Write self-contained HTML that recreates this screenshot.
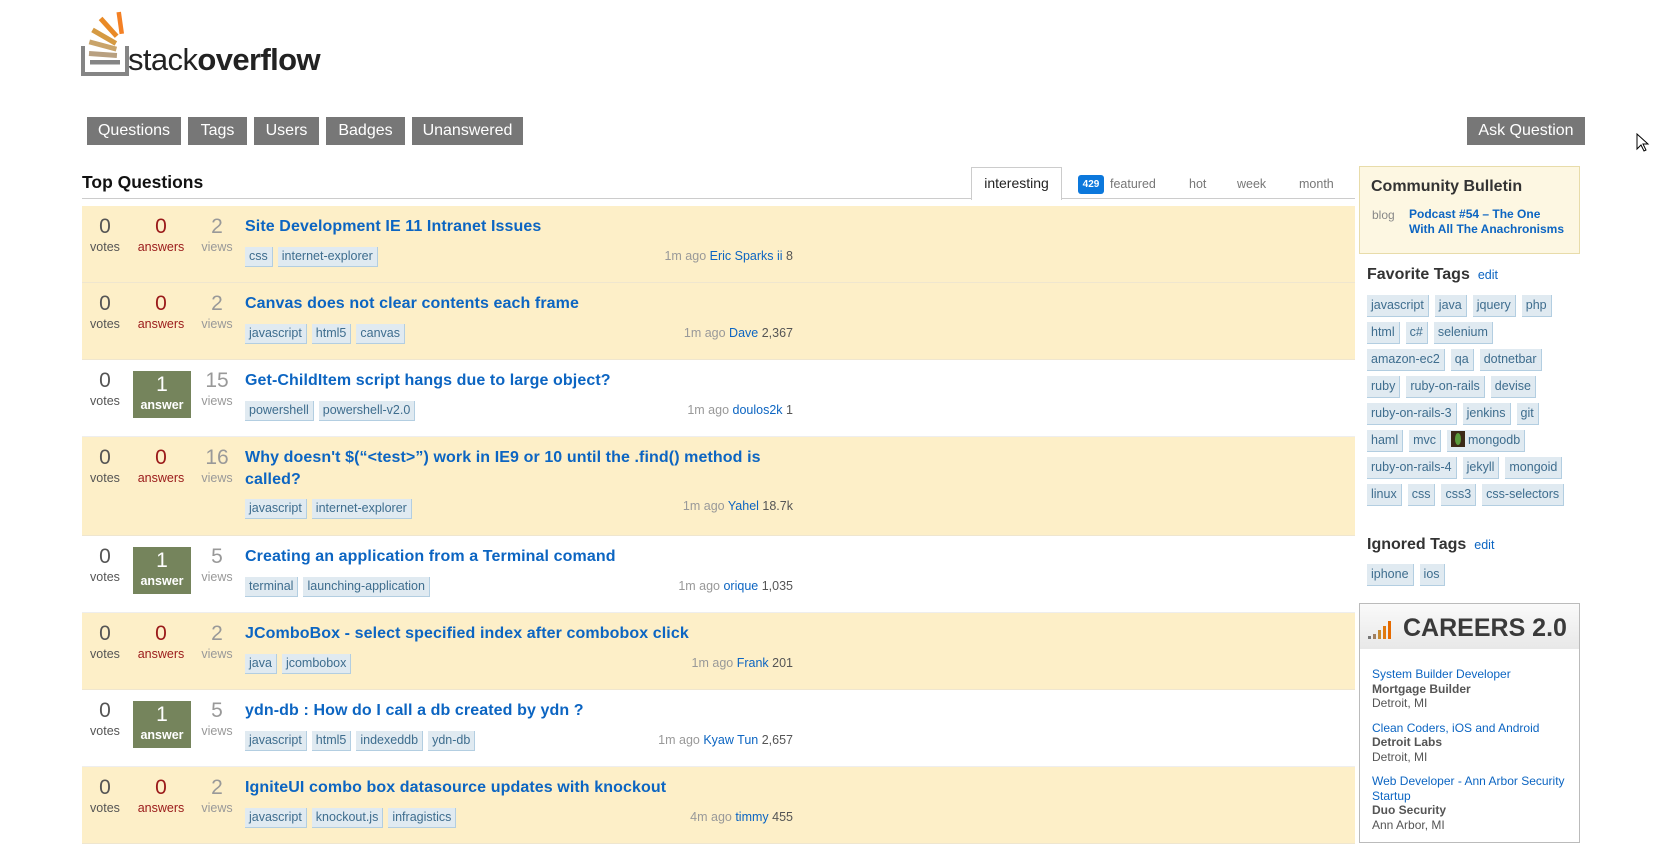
<!DOCTYPE html>
<html><head><meta charset="utf-8"><style>
*{margin:0;padding:0;box-sizing:border-box}
body{width:1654px;height:836px;overflow:hidden;background:#fff;font-family:"Liberation Sans",Arial,sans-serif;position:relative}
.abs{position:absolute}
.nav{position:absolute;top:117px;height:28px;background:#777;color:#fff;font-size:16px;line-height:28px;text-align:center}
.row{position:absolute;left:82px;width:1273px;height:77px;border-bottom:1px solid #efe6cf}
.cream{background:#fdefc8}
.white{background:#fff;border-bottom:1px solid #eee}
.st{position:absolute;top:9px;width:56px;text-align:center}
.st b{display:block;font-weight:normal;font-size:21px;line-height:24px}
.st span{display:block;font-size:12.5px;line-height:16px}
.v{left:-5px;color:#555}
.a{left:51px;color:#9a1a1a}
.vw{left:107px;color:#999}
.ans{position:absolute;left:51px;top:11px;width:58px;height:47px;background:#75845c;color:#fff;text-align:center}
.ans b{display:block;font-weight:normal;font-size:21px;line-height:24px;padding-top:2px}
.ans span{display:block;font-size:12.5px;font-weight:bold;line-height:17px}
.t{position:absolute;left:163px;top:10px;width:570px;color:#0c65c2;font-weight:bold;font-size:16px;line-height:22px;letter-spacing:0.1px}
.tags{position:absolute;left:163px;top:41px;display:flex}
.tag{background:#e0eaf1;color:#3e6d8e;border-right:1px solid #b3cee1;border-bottom:1px solid #b3cee1;font-size:12.5px;height:20px;line-height:19px;padding:0 4px;margin-right:5px;white-space:nowrap}
.info{position:absolute;right:562px;top:43px;font-size:12.5px;color:#999;white-space:nowrap}
.info a{color:#0c65c2;text-decoration:none}
.info i{font-style:normal;color:#555}
.side{position:absolute;left:1367px;width:215px}
.sh{font-size:16px;font-weight:bold;color:#333}
.sh a{font-size:12.5px;font-weight:normal;color:#0c65c2;margin-left:8px}
.tr{display:flex;height:27px}
.tr .tag{margin-right:6px;height:22px;line-height:21px;padding:0 4px;font-size:12.5px}
.job{font-size:12px;line-height:14.5px;color:#555;margin-bottom:10px}
.job a{color:#0c65c2}
.job b{display:block;color:#555}
</style></head><body>

<svg class="abs" style="left:80px;top:10px" width="52" height="66" viewBox="0 0 52 66">
<path d="M3 36v28h44V36" fill="none" stroke="#858585" stroke-width="4"/>
<rect x="10" y="50" width="30" height="4.5" fill="#858585"/>
<rect x="9" y="42" width="28" height="5" fill="#b8a080" transform="rotate(4 23 44)"/>
<rect x="9" y="33" width="28" height="5" fill="#c9a46a" transform="rotate(15 23 35)"/>
<rect x="11" y="24" width="27" height="5" fill="#d59a42" transform="rotate(30 24 26)"/>
<rect x="17" y="15" width="24" height="5" fill="#e98a26" transform="rotate(48 29 17)"/>
<rect x="38" y="2" width="4.5" height="22" fill="#f48024" transform="rotate(-8 40 13)"/>
</svg>
<div class="abs" style="left:128px;top:40px;font-size:31px;color:#222;letter-spacing:-0.6px;line-height:40px">stack<b>overflow</b></div>

<div class="nav" style="left:87px;width:94px">Questions</div>
<div class="nav" style="left:188px;width:59px">Tags</div>
<div class="nav" style="left:254px;width:65px">Users</div>
<div class="nav" style="left:326px;width:79px">Badges</div>
<div class="nav" style="left:412px;width:111px">Unanswered</div>
<div class="nav" style="left:1467px;width:118px">Ask Question</div>

<svg class="abs" style="left:1636px;top:133px" width="14" height="20" viewBox="0 0 14 20"><path d="M1 1v15l4-4 3 6 2-1-3-6h5z" fill="#fff" stroke="#000" stroke-width="1"/></svg>

<div class="abs" style="left:82px;top:172px;font-size:17.5px;font-weight:bold;color:#111">Top Questions</div>
<div class="abs" style="left:82px;top:198px;width:1273px;height:1px;background:#ccc"></div>
<div class="abs" style="left:971px;top:167px;width:91px;height:33px;background:#fff;border:1px solid #ccc;border-bottom:none;font-size:14px;color:#222;text-align:center;line-height:30px">interesting</div>
<div class="abs" style="left:1078px;top:175px;width:26px;height:19px;background:#0c78dc;border-radius:3px;color:#fff;font-size:10px;font-weight:bold;text-align:center;line-height:19px">429</div>
<div class="abs" style="left:1110px;top:177px;font-size:12.5px;color:#777">featured</div>
<div class="abs" style="left:1189px;top:177px;font-size:12.5px;color:#777">hot</div>
<div class="abs" style="left:1237px;top:177px;font-size:12.5px;color:#777">week</div>
<div class="abs" style="left:1299px;top:177px;font-size:12.5px;color:#777">month</div>

<div class="row cream" style="top:206px">
<div class="st v"><b>0</b><span>votes</span></div><div class="st a"><b>0</b><span>answers</span></div><div class="st vw"><b>2</b><span>views</span></div>
<div class="t">Site Development IE 11 Intranet Issues</div>
<div class="tags"><span class="tag">css</span><span class="tag">internet-explorer</span></div>
<div class="info">1m ago <a>Eric Sparks ii</a> <i>8</i></div></div>

<div class="row cream" style="top:283px">
<div class="st v"><b>0</b><span>votes</span></div><div class="st a"><b>0</b><span>answers</span></div><div class="st vw"><b>2</b><span>views</span></div>
<div class="t">Canvas does not clear contents each frame</div>
<div class="tags"><span class="tag">javascript</span><span class="tag">html5</span><span class="tag">canvas</span></div>
<div class="info">1m ago <a>Dave</a> <i>2,367</i></div></div>

<div class="row white" style="top:360px">
<div class="st v"><b>0</b><span>votes</span></div><div class="ans"><b>1</b><span>answer</span></div><div class="st vw"><b>15</b><span>views</span></div>
<div class="t">Get-ChildItem script hangs due to large object?</div>
<div class="tags"><span class="tag">powershell</span><span class="tag">powershell-v2.0</span></div>
<div class="info">1m ago <a>doulos2k</a> <i>1</i></div></div>

<div class="row cream" style="top:437px;height:99px">
<div class="st v"><b>0</b><span>votes</span></div><div class="st a"><b>0</b><span>answers</span></div><div class="st vw"><b>16</b><span>views</span></div>
<div class="t" style="width:560px">Why doesn't $(“&lt;test&gt;”) work in IE9 or 10 until the .find() method is called?</div>
<div class="tags" style="top:62px"><span class="tag">javascript</span><span class="tag">internet-explorer</span></div>
<div class="info" style="top:62px">1m ago <a>Yahel</a> <i>18.7k</i></div></div>

<div class="row white" style="top:536px">
<div class="st v"><b>0</b><span>votes</span></div><div class="ans"><b>1</b><span>answer</span></div><div class="st vw"><b>5</b><span>views</span></div>
<div class="t">Creating an application from a Terminal comand</div>
<div class="tags"><span class="tag">terminal</span><span class="tag">launching-application</span></div>
<div class="info">1m ago <a>orique</a> <i>1,035</i></div></div>

<div class="row cream" style="top:613px">
<div class="st v"><b>0</b><span>votes</span></div><div class="st a"><b>0</b><span>answers</span></div><div class="st vw"><b>2</b><span>views</span></div>
<div class="t">JComboBox - select specified index after combobox click</div>
<div class="tags"><span class="tag">java</span><span class="tag">jcombobox</span></div>
<div class="info">1m ago <a>Frank</a> <i>201</i></div></div>

<div class="row white" style="top:690px">
<div class="st v"><b>0</b><span>votes</span></div><div class="ans"><b>1</b><span>answer</span></div><div class="st vw"><b>5</b><span>views</span></div>
<div class="t">ydn-db : How do I call a db created by ydn ?</div>
<div class="tags"><span class="tag">javascript</span><span class="tag">html5</span><span class="tag">indexeddb</span><span class="tag">ydn-db</span></div>
<div class="info">1m ago <a>Kyaw Tun</a> <i>2,657</i></div></div>

<div class="row cream" style="top:767px">
<div class="st v"><b>0</b><span>votes</span></div><div class="st a"><b>0</b><span>answers</span></div><div class="st vw"><b>2</b><span>views</span></div>
<div class="t">IgniteUI combo box datasource updates with knockout</div>
<div class="tags"><span class="tag">javascript</span><span class="tag">knockout.js</span><span class="tag">infragistics</span></div>
<div class="info">4m ago <a>timmy</a> <i>455</i></div></div>

<div class="abs" style="left:1359px;top:166px;width:221px;height:88px;background:#fdf7e2;border:1px solid #e8dcaa;padding:11px 11px">
<div style="font-size:16px;font-weight:bold;color:#333">Community Bulletin</div>
<div style="position:absolute;left:12px;top:41px;font-size:12px;color:#888">blog</div>
<div style="position:absolute;left:49px;top:40px;font-size:12px;font-weight:bold;color:#0c65c2;line-height:14.5px;width:160px">Podcast #54 – The One With All The Anachronisms</div>
</div>

<div class="side" style="top:266px"><div class="sh">Favorite Tags<a>edit</a></div></div>
<div class="side" style="top:295px">
<div class="tr"><span class="tag">javascript</span><span class="tag">java</span><span class="tag">jquery</span><span class="tag">php</span></div>
<div class="tr"><span class="tag">html</span><span class="tag">c#</span><span class="tag">selenium</span></div>
<div class="tr"><span class="tag">amazon-ec2</span><span class="tag">qa</span><span class="tag">dotnetbar</span></div>
<div class="tr"><span class="tag">ruby</span><span class="tag">ruby-on-rails</span><span class="tag">devise</span></div>
<div class="tr"><span class="tag">ruby-on-rails-3</span><span class="tag">jenkins</span><span class="tag">git</span></div>
<div class="tr"><span class="tag">haml</span><span class="tag">mvc</span><span class="tag"><span style="display:inline-block;width:14px;height:16px;background:#3b2a17;vertical-align:-3px;margin-right:3px;position:relative"><span style="position:absolute;left:4px;top:2px;width:6px;height:12px;background:#5a9c3c;border-radius:50%"></span></span>mongodb</span></div>
<div class="tr"><span class="tag">ruby-on-rails-4</span><span class="tag">jekyll</span><span class="tag">mongoid</span></div>
<div class="tr"><span class="tag">linux</span><span class="tag">css</span><span class="tag">css3</span><span class="tag">css-selectors</span></div>
</div>

<div class="side" style="top:536px"><div class="sh">Ignored Tags<a>edit</a></div></div>
<div class="side" style="top:564px"><div class="tr"><span class="tag">iphone</span><span class="tag">ios</span></div></div>

<div class="abs" style="left:1359px;top:603px;width:221px;height:240px;border:1px solid #bbb">
<div style="height:45px;background:linear-gradient(#fafafa,#e8e8e8);position:relative">
<svg style="position:absolute;left:8px;top:16px" width="30" height="20" viewBox="0 0 30 20"><rect x="0" y="16" width="3" height="3" fill="#777"/><rect x="5" y="14" width="3" height="5" fill="#a08060"/><rect x="10" y="10" width="3" height="9" fill="#c98a30"/><rect x="15" y="6" width="3" height="13" fill="#e07a10"/><rect x="20" y="1" width="3" height="18" fill="#e56a00"/></svg>
<div style="position:absolute;left:43px;top:10px;font-size:25px;font-weight:bold;color:#3a3a3a;white-space:nowrap">CAREERS 2.0</div>
</div>
<div style="padding:18px 12px 0 12px">
<div class="job"><a>System Builder Developer</a><b>Mortgage Builder</b>Detroit, MI</div>
<div class="job"><a>Clean Coders, iOS and Android</a><b>Detroit Labs</b>Detroit, MI</div>
<div class="job"><a>Web Developer - Ann Arbor Security Startup</a><b>Duo Security</b>Ann Arbor, MI</div>
</div></div>

</body></html>
